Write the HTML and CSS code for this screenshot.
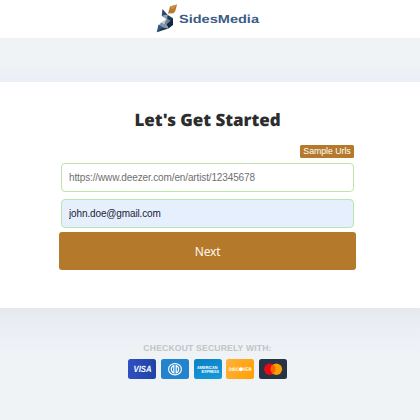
FILE: index.html
```html
<!DOCTYPE html>
<html lang="en">
<head>
    <meta charset="UTF-8">
    <meta name="viewport" content="width=device-width, initial-scale=1.0">
    <title>SidesMedia - Let's Get Started</title>
    <link rel="stylesheet" href="styles.css">
</head>
<body>
    <header class="header">
        <svg class="logo" width="104" height="32" viewBox="0 0 104 32" role="img" aria-label="SidesMedia">
            <path d="M14 2.500l7-2-1.700 6.500-1.800 2.300-5.500.3z" fill="#b87a2d"/>
            <path d="M14 2.500l7-2-4.500 5z" fill="#cc9148"/>
            <path d="M6.500 5l5.200 6-6 1z" fill="#29486b"/>
            <path d="M5.700 12l6-1 5.300 3-6 1.500z" fill="#8fa2b3"/>
            <path d="M11.700 11l5.300 3.500v4.500l-6-3.500z" fill="#1d3a57"/>
            <path d="M11 14.500l-6 4 5 1z" fill="#c3ccd5"/>
            <path d="M11 14.500l6 4-6.500 3.500-2-2.500z" fill="#6c8297"/>
            <path d="M17 14.500v6.500l-4.500 3.500-2-4z" fill="#0f2740"/>
            <path d="M5 18.500l5.500 2 2 4-6-.5-4-2z" fill="#8497a8"/>
            <path d="M2.500 20.500l6 4L.7 28.300z" fill="#31577d"/>
            <path d="M6.500 23.500l6 1L.7 28.300z" fill="#1b3854"/>
            <text class="logo-text" x="23" y="19" textLength="80" lengthAdjust="spacingAndGlyphs">SidesMedia</text>
        </svg>
    </header>

    <main class="content">
        <section class="card">
            <h1>Let's Get Started</h1>
            <form class="order-form">
                <button type="button" class="sample-btn">Sample Urls</button>
                <input type="text" class="field" placeholder="https://www.deezer.com/en/artist/12345678">
                <input type="email" class="field filled" value="john.doe@gmail.com">
                <button type="button" class="next-btn">Next</button>
            </form>
        </section>
    </main>

    <footer class="checkout">
        <p>CHECKOUT SECURELY WITH:</p>
        <div class="cards">
            <svg class="pay visa" viewBox="0 0 28 20">
                <text x="5.500" y="13.300" font-size="9" font-style="italic" textLength="18" lengthAdjust="spacingAndGlyphs">VISA</text>
            </svg>
            <svg class="pay diners" viewBox="0 0 28 20">
                <ellipse cx="14" cy="10.200" rx="6.400" ry="5.700" fill="none" stroke="#fff" stroke-width="1.100"/>
                <path d="M12.800 6.500a4 4 0 0 0 0 7.400zM15.200 6.500a4 4 0 0 1 0 7.400z" fill="none" stroke="#fff" stroke-width="1.200"/>
            </svg>
            <svg class="pay amex" viewBox="0 0 28 20">
                <text x="3" y="9.600" font-size="4.300" textLength="20.500" lengthAdjust="spacingAndGlyphs">AMERICAN</text>
                <text x="7.500" y="13.700" font-size="4.300" textLength="17.500" lengthAdjust="spacingAndGlyphs">EXPRESS</text>
            </svg>
            <svg class="pay discover" viewBox="0 0 28 20">
                <text x="2.800" y="12" font-size="5" textLength="10.300" lengthAdjust="spacingAndGlyphs">DISC</text>
                <circle cx="14.900" cy="10.200" r="2" fill="#fff"/>
                <text x="16.800" y="12" font-size="5" textLength="8.600" lengthAdjust="spacingAndGlyphs">VER</text>
            </svg>
            <svg class="pay mastercard" viewBox="0 0 28 20">
                <circle cx="10.800" cy="10.200" r="5.700" fill="#eb0a12"/>
                <circle cx="17.400" cy="10.200" r="5.700" fill="#f9a000"/>
                <path d="M14.100 5.600a5.700 5.700 0 0 1 0 9.200 5.700 5.700 0 0 1 0-9.200z" fill="#fa5f08"/>
            </svg>
        </div>
    </footer>
</body>
</html>
```
FILE: styles.css
```css
* {
    box-sizing: border-box;
}
body {
    margin: 0;
    min-height: 100vh;
    background: #eff3f6;
    font-family: "Liberation Sans", Arial, sans-serif;
    text-rendering: geometricPrecision;
}
.header {
    height: 38px;
    padding: 4px 5px 0 0;
    background: #fff;
    text-align: center;
}
.logo {
    display: block;
    margin: 0 auto;
}
.logo-text {
    font-size: 11.8px;
    font-weight: bold;
    fill: #3b5c86;
}
.content {
    padding-top: 44px;
    background: linear-gradient(#eff3f6 26px, #ebeff6 44px);
}
.card {
    height: 226px;
    padding: 23px 5px 0 0;
    background: #fff;
}
h1 {
    margin: 0;
    color: #2d2d2d;
    font-family: "Noto Sans", "Open Sans", sans-serif;
    font-size: 17px;
    font-weight: 900;
    letter-spacing: -0.05px;
    line-height: 30px;
    text-align: center;
}
.order-form {
    display: flex;
    flex-direction: column;
    width: 297px;
    margin: 10px auto 0;
}
.sample-btn {
    align-self: flex-end;
    width: 54px;
    height: 13px;
    margin: 0 2px 5px 0;
    padding: 0;
    border: none;
    border-radius: 1.5px;
    background: #b4792b;
    color: #fff;
    font-family: inherit;
    font-size: 8.8px;
    letter-spacing: -0.05px;
    line-height: 13px;
}
.field {
    height: 29px;
    margin: 0 2px 7px 1.5px;
    padding: 0 7.5px;
    border: 1px solid #bce5a8;
    border-radius: 4px;
    color: #1b2430;
    font-family: inherit;
    font-size: 10px;
    letter-spacing: -0.13px;
}
.field::placeholder {
    color: #707070;
    opacity: 1;
}
.field.filled {
    margin-bottom: 4px;
    background: #e6effe;
}
.next-btn {
    height: 38px;
    padding: 0;
    border: none;
    border-radius: 3px;
    background: #b4792b;
    color: #fff8ea;
    font-family: "Noto Sans", sans-serif;
    font-size: 12px;
    letter-spacing: -0.2px;
}
.checkout {
    padding: 34px 5px 0 0;
    background: linear-gradient(#e5e8ec, #ebeef6 20px, #eff3f6 46px);
    text-align: center;
}
.checkout p {
    margin: 0;
    color: #c2c4c7;
    font-size: 8.6px;
    font-weight: bold;
    letter-spacing: 0.18px;
    line-height: 12px;
}
.cards {
    display: flex;
    justify-content: center;
    gap: 4.7px;
    margin-top: 5px;
}
.pay {
    width: 28px;
    height: 20px;
    border-radius: 2.5px;
}
.pay text {
    fill: #fff;
    font-weight: bold;
}
.visa {
    background: linear-gradient(90deg, #304fc2, #1d45a5);
}
.diners {
    background: #2383cd;
}
.amex {
    background: linear-gradient(160deg, #0b80c5, #159bd9);
}
.discover {
    background: linear-gradient(120deg, #ffb23a, #ffa000);
}
.mastercard {
    background: #263445;
}
```
